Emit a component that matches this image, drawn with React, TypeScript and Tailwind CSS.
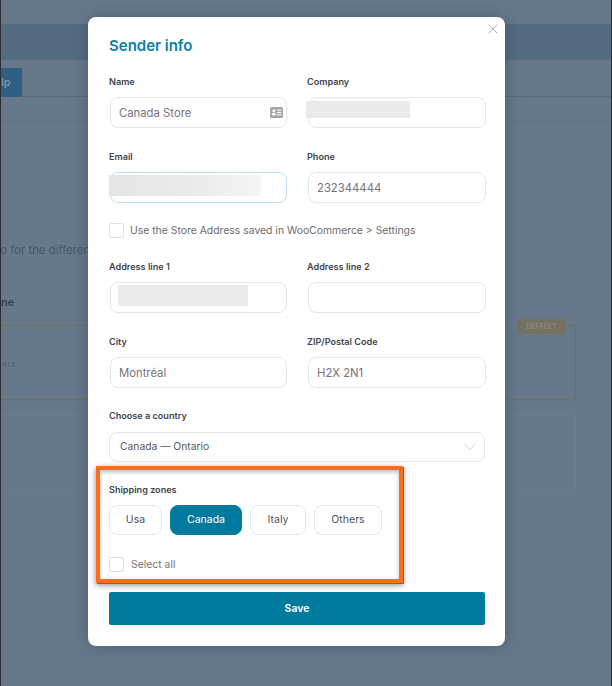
import React from "react";
import { ChevronDown, X } from "lucide-react";

const font = { fontFamily: "Inter, 'Liberation Sans', sans-serif" };

const Label = ({ children, block, gap }: { children: React.ReactNode; block?: boolean; gap?: string }) => (
  <label
    className={`block h-4 text-[9.1px] font-semibold text-[#3f444b] ${block ? "leading-4" : "leading-[17px]"} ${gap ?? "mb-2"}`}
  >
    {children}
  </label>
);

const Field = ({
  label,
  value,
  focused,
  children,
}: {
  label: string;
  value?: string;
  focused?: boolean;
  children?: React.ReactNode;
}) => (
  <div>
    <Label>{label}</Label>
    <div
      className={`relative ml-px h-[31px] rounded-lg border bg-white pl-2 pt-px flex items-center text-[11.3px] text-[#7b7176] ${
        focused ? "border-[#b5e3f0]" : "border-[#e6e6e8]"
      }`}
    >
      {value}
      {children}
    </div>
  </div>
);

const Zone = ({ name, active }: { name: string; active?: boolean }) => (
  <button
    className={`h-[30px] rounded-lg border text-[10.5px] flex items-center justify-center ${
      active ? "bg-[#017aa0] border-[#017aa0] text-white w-[72px]" : "bg-white border-[#e6e6e8] text-[#4f5359]"
    } ${name === "Usa" ? "w-[53px]" : ""} ${name === "Italy" ? "w-[56px]" : ""} ${name === "Others" ? "w-[68px]" : ""}`}
  >
    {name}
  </button>
);

const Check = () => <span className="block w-[15px] h-[15px] rounded-[2px] border border-[#e0e0e3] bg-white" />;

const Backdrop = () => (
  <div className="h-[686px] overflow-hidden bg-[#66788a] border-x border-x-[#2a2d31] text-[#46586c]">
    <div className="h-6 bg-[#66788a]" />
    <div className="h-9 bg-[#556b80]" />
    <div className="h-[37px] pt-2 border-b border-b-[#59697b]">
      <div className="w-[21px] h-[29px] bg-[#2f5f82] text-[#7f9bb0] text-[11px] leading-[29px] font-medium">lp</div>
    </div>
    <div className="h-[25px] border-b border-b-[#5f7184]" />
    <div className="h-[136px] flex items-end blur-[0.4px]">
      <p className="text-[11.4px] whitespace-nowrap leading-4 -ml-[124px]">
        Set different sender info for the different zones
      </p>
    </div>
    <p className="mt-9 text-[11px] leading-4 font-semibold text-[#2f3d4f] blur-[0.3px]">ne</p>
    <div className="relative mt-[15px] -ml-3 mr-[35px] h-[75px] rounded-[3px] border border-[#6f7060] flex items-center">
      <span className="pl-3 pt-[3px] text-[9px] text-[#4e5f70] blur-[0.3px]">ers</span>
      <span className="absolute -top-[7px] right-[9px] w-[49px] h-[15px] rounded-[3px] bg-[#75705f] text-[7px] leading-[15px] text-center text-[#8f9295]">
        DEFAULT
      </span>
    </div>
    <div className="mt-[15px] -ml-3 mr-[35px] h-[75px] rounded-[3px] border border-[#6b7d8f]" />
  </div>
);

export default function App() {
  return (
    <div className="relative w-[612px] h-[686px] overflow-hidden" style={font}>
      <Backdrop />

      <div className="absolute left-[88px] top-[17px] w-[417px] h-[629px] rounded-lg bg-white shadow-[0_0_16px_rgba(50,70,90,0.5)] pl-[21px] pr-5 pt-5">
        <button className="absolute right-1 top-1 text-[#a9adb0]">
          <X className="w-4 h-4" strokeWidth={1.5} />
        </button>
        <h2 className="h-[18px] text-[15px] leading-[18px] font-semibold text-[#0b7fa5]">Sender info</h2>

        <div className="mt-[18px] grid grid-cols-[178px_179px] gap-x-5 gap-y-5">
          <Field label="Name" value="Canada Store">
            <svg className="absolute right-[3px] top-[9px] w-[13px] h-[11px]" viewBox="0 0 13 11">
              <rect width="13" height="11" rx="1.5" fill="#a5a5a7" />
              <circle cx="3.8" cy="4" r="1.4" fill="#fff" />
              <rect x="1.8" y="6" width="4" height="2.4" rx="0.6" fill="#fff" />
              <rect x="7" y="2.6" width="4.4" height="1.1" fill="#fff" />
              <rect x="7" y="5" width="4.4" height="1.1" fill="#fff" />
              <rect x="7" y="7.3" width="4.4" height="1.1" fill="#fff" />
            </svg>
          </Field>
          <Field label="Company">
            <span className="absolute -left-[3px] top-[3px] w-[104px] h-[17px] bg-[#ebeaeb]" />
          </Field>
          <Field label="Email" focused>
            <span className="absolute -left-[2px] top-[2px] w-[152px] h-[21px] bg-gradient-to-r from-[#e6e5e6] via-[#ebeaeb] to-[#f5f5f6]" />
          </Field>
          <Field label="Phone" value="232344444" />
        </div>

        <div className="mt-5 h-[15px] flex items-center gap-[6px] text-[10.4px] text-[#6e6a6e] whitespace-nowrap">
          <Check />
          <span>Use the Store Address saved in WooCommerce &gt; Settings</span>
        </div>

        <div className="mt-5 grid grid-cols-[178px_179px] gap-x-5 gap-y-5">
          <Field label="Address line 1">
            <span className="absolute left-[7px] top-[2px] w-[130px] h-[21px] bg-[#ecebec]" />
          </Field>
          <Field label="Address line 2" />
          <Field label="City" value="Montréal" />
          <Field label="ZIP/Postal Code" value="H2X 2N1" />
        </div>

        <div className="mt-5">
          <Label block>Choose a country</Label>
          <div className="h-[30px] w-[376px] rounded-lg border border-[#e6e6e8] bg-white pl-2.5 pr-[4px] flex items-center justify-between text-[10.3px] text-[#55585d]">
            <span>Canada — Ontario</span>
            <ChevronDown className="w-5 h-5 text-[#cfd2d4]" strokeWidth={1.2} />
          </div>
        </div>

        <div className="mt-5">
          <Label block gap="mb-[7px]">Shipping zones</Label>
          <div className="flex gap-2">
            <Zone name="Usa" />
            <Zone name="Canada" active />
            <Zone name="Italy" />
            <Zone name="Others" />
          </div>
        </div>

        <div className="mt-[22px] h-[15px] flex items-center gap-[7px] text-[10.4px] text-[#7b7176]">
          <Check />
          <span>Select all</span>
        </div>

        <button className="mt-5 w-[376px] h-[33px] rounded-[2px] bg-[#017aa0] text-white text-[10.5px] font-semibold">
          Save
        </button>
      </div>

      <div className="absolute left-[96px] top-[466px] w-[307px] h-[117px] border-4 border-[#ff6c1c] shadow-[1px_1px_0_#d8402a,0_2px_6px_rgba(40,40,40,0.55),inset_0_2px_4px_rgba(60,60,60,0.35)] pointer-events-none" />
    </div>
  );
}
